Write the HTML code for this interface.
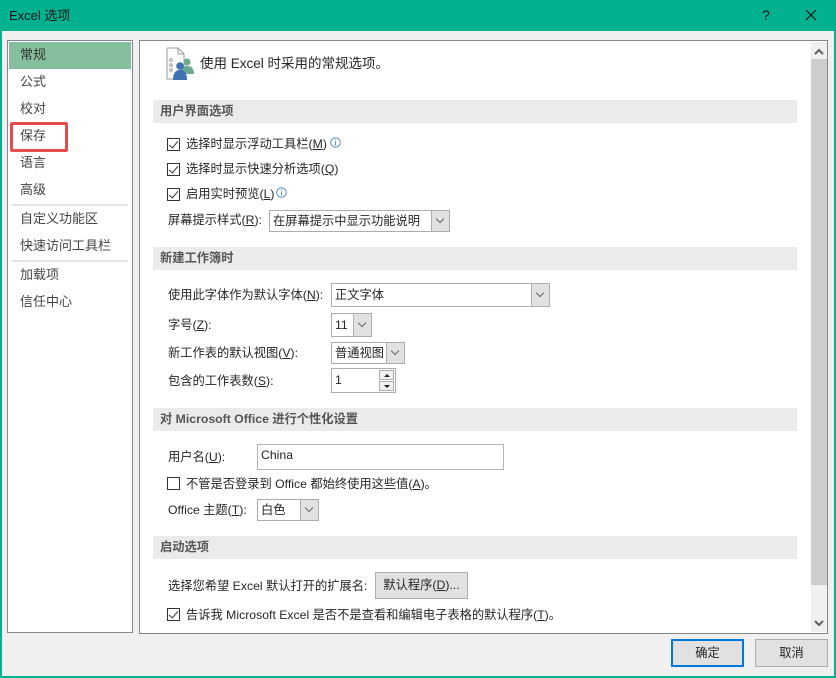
<!DOCTYPE html>
<html><head><meta charset="utf-8">
<style>
*{margin:0;padding:0;box-sizing:border-box}
body{width:836px;height:678px;overflow:hidden;background:#f0f0f0;font-family:"Liberation Sans","Noto Sans CJK SC",sans-serif;font-size:12.25px;line-height:16px;color:#262626;position:relative}
.a{position:absolute;white-space:nowrap}
.title{left:0;top:0;width:836px;height:31px;background:#02b18f}
.hb{background:#ebebeb;height:23px;left:153px;width:644px;font-weight:bold;color:#555;padding:3px 0 0 7px}
.cb{width:13px;height:13px;border:1px solid #333;background:#fff}
.cb.on::after{content:"";position:absolute;left:3px;top:0px;width:4px;height:8px;border:solid #333;border-width:0 1.5px 1.5px 0;transform:rotate(40deg)}
.combo{border:1px solid #adadad;background:#fff;padding:0 0 0 3px}
.dd{position:absolute;right:0;top:0;bottom:0;width:18px;background:#e1e1e1;border-left:1px solid #adadad}
.dd::after{content:"";position:absolute;left:5px;top:50%;margin-top:-5px;width:5px;height:5px;border:solid #666;border-width:0 1px 1px 0;transform:rotate(45deg)}
.nav{font-size:13px;color:#444}
.btn{background:#e1e1e1;border:1px solid #adadad;text-align:center}
u{text-decoration:underline}
</style></head><body>
<div class="a title"></div>
<div class="a" style="left:9px;top:8px;font-size:13px;color:#1a1a1a">Excel 选项</div>
<div class="a" style="left:762px;top:7px;font-size:14px;color:#111">?</div>
<svg class="a" style="left:805px;top:9px" width="12" height="12"><path d="M1 1L11 11M11 1L1 11" stroke="#111" stroke-width="1.2"/></svg>
<div class="a" style="left:0;top:31px;width:2px;height:647px;background:#02b18f"></div>
<div class="a" style="left:834px;top:31px;width:2px;height:647px;background:#02b18f"></div>
<div class="a" style="left:0;top:676px;width:836px;height:2px;background:#02b18f"></div>

<div class="a" style="left:7px;top:40px;width:126px;height:593px;background:#fff;border:1px solid #828790"></div>
<div class="a" style="left:9px;top:42px;width:122px;height:27px;background:#86bf9e"></div>
<div class="a nav" style="left:20px;top:47px;color:#333">常规</div>
<div class="a nav" style="left:20px;top:74px">公式</div>
<div class="a nav" style="left:20px;top:101px">校对</div>
<div class="a" style="left:10px;top:122px;width:58px;height:30px;border:3px solid #e74c4c;border-radius:2px"></div>
<div class="a nav" style="left:20px;top:128px">保存</div>
<div class="a nav" style="left:20px;top:155px">语言</div>
<div class="a nav" style="left:20px;top:182px">高级</div>
<div class="a" style="left:12px;top:204px;width:116px;height:2px;background:#e5e5e5"></div>
<div class="a nav" style="left:20px;top:211px">自定义功能区</div>
<div class="a nav" style="left:20px;top:238px">快速访问工具栏</div>
<div class="a" style="left:12px;top:260px;width:116px;height:2px;background:#e5e5e5"></div>
<div class="a nav" style="left:20px;top:267px">加载项</div>
<div class="a nav" style="left:20px;top:294px">信任中心</div>

<div class="a" style="left:139px;top:40px;width:689px;height:594px;background:#fff;border:1px solid #828790"></div>
<div class="a" style="left:811px;top:42px;width:16px;height:590px;background:#f0f0f0"></div>
<div class="a" style="left:811px;top:59px;width:16px;height:526px;background:#cdcdcd"></div>
<svg class="a" style="left:814px;top:48px" width="10" height="7"><path d="M1 6L5 2L9 6" stroke="#606060" stroke-width="2" fill="none"/></svg>
<svg class="a" style="left:814px;top:620px" width="10" height="7"><path d="M1 1L5 5L9 1" stroke="#606060" stroke-width="2" fill="none"/></svg>

<svg class="a" style="left:166px;top:47px" width="30" height="34">
<path d="M1 1H12L18 7V22" fill="none" stroke="#999"/><path d="M12 1V7H18" fill="none" stroke="#999"/>
<path d="M1 1V32H8" fill="none" stroke="#999"/>
<circle cx="5" cy="13" r="1.3" fill="none" stroke="#999"/><circle cx="5" cy="18" r="1.3" fill="none" stroke="#999"/><circle cx="5" cy="23" r="1.3" fill="none" stroke="#999"/>
<circle cx="21" cy="15" r="3.5" fill="#6aa88f"/><path d="M14 27Q14 19 21 19Q28 19 28 27Z" fill="#6aa88f"/>
<circle cx="14" cy="19" r="3.8" fill="#3f73b3"/><path d="M7 33Q7 23 14 23Q21 23 21 33Z" fill="#3f73b3"/>
</svg>
<div class="a" style="left:200px;top:56px;font-size:13.5px">使用 Excel 时采用的常规选项。</div>

<div class="a hb" style="top:100px">用户界面选项</div>
<div class="a cb on" style="left:167px;top:138px"></div><div class="a" style="left:186px;top:136px">选择时显示浮动工具栏(<u>M</u>)</div>
<svg class="a" style="left:330px;top:137px" width="11" height="11"><circle cx="5.5" cy="5.5" r="4.8" fill="none" stroke="#5a8fd0"/><path d="M5.5 4.5V8.5M5.5 2.5V3.5" stroke="#5a8fd0"/></svg>
<div class="a cb on" style="left:167px;top:163px"></div><div class="a" style="left:186px;top:161px">选择时显示快速分析选项(<u>Q</u>)</div>
<div class="a cb on" style="left:167px;top:188px"></div><div class="a" style="left:186px;top:186px">启用实时预览(<u>L</u>)</div>
<svg class="a" style="left:276px;top:187px" width="11" height="11"><circle cx="5.5" cy="5.5" r="4.8" fill="none" stroke="#5a8fd0"/><path d="M5.5 4.5V8.5M5.5 2.5V3.5" stroke="#5a8fd0"/></svg>
<div class="a" style="left:168px;top:212px">屏幕提示样式(<u>R</u>):</div>
<div class="a combo" style="left:269px;top:210px;width:181px;height:22px;line-height:20px">在屏幕提示中显示功能说明<span class="dd"></span></div>

<div class="a hb" style="top:247px">新建工作簿时</div>
<div class="a" style="left:168px;top:287px">使用此字体作为默认字体(<u>N</u>):</div>
<div class="a combo" style="left:331px;top:283px;width:219px;height:24px;line-height:22px">正文字体<span class="dd"></span></div>
<div class="a" style="left:168px;top:317px">字号(<u>Z</u>):</div>
<div class="a combo" style="left:331px;top:313px;width:41px;height:24px;line-height:22px">11<span class="dd"></span></div>
<div class="a" style="left:168px;top:345px">新工作表的默认视图(<u>V</u>):</div>
<div class="a combo" style="left:331px;top:342px;width:74px;height:22px;line-height:20px">普通视图<span class="dd"></span></div>
<div class="a" style="left:168px;top:373px">包含的工作表数(<u>S</u>):</div>
<div class="a combo" style="left:331px;top:368px;width:65px;height:25px;line-height:22px">1</div>
<div class="a" style="left:379px;top:370px;width:15px;height:10px;background:#f0f0f0;border:1px solid #adadad"></div>
<div class="a" style="left:379px;top:381px;width:15px;height:10px;background:#f0f0f0;border:1px solid #adadad"></div>
<svg class="a" style="left:383px;top:372px" width="8" height="18"><path d="M1 5L4 2L7 5Z M1 13L4 16L7 13Z" fill="#222"/></svg>

<div class="a hb" style="top:408px">对 Microsoft Office 进行个性化设置</div>
<div class="a" style="left:168px;top:449px">用户名(<u>U</u>):</div>
<div class="a combo" style="left:257px;top:444px;width:247px;height:26px;line-height:20px;border-color:#b5b5b5">China</div>
<div class="a cb" style="left:167px;top:477px"></div><div class="a" style="left:186px;top:476px">不管是否登录到 Office 都始终使用这些值(<u>A</u>)。</div>
<div class="a" style="left:168px;top:502px">Office 主题(<u>T</u>):</div>
<div class="a combo" style="left:257px;top:499px;width:62px;height:22px;line-height:20px">白色<span class="dd"></span></div>

<div class="a hb" style="top:536px">启动选项</div>
<div class="a" style="left:168px;top:578px">选择您希望 Excel 默认打开的扩展名:</div>
<div class="a btn" style="left:375px;top:572px;width:93px;height:27px;line-height:25px">默认程序(<u>D</u>)...</div>
<div class="a cb on" style="left:167px;top:608px"></div><div class="a" style="left:186px;top:607px">告诉我 Microsoft Excel 是否不是查看和编辑电子表格的默认程序(<u>T</u>)。</div>

<div class="a btn" style="left:671px;top:639px;width:73px;height:28px;border:2px solid #0078d7;line-height:24px">确定</div>
<div class="a btn" style="left:755px;top:639px;width:73px;height:28px;line-height:26px">取消</div>
</body></html>
